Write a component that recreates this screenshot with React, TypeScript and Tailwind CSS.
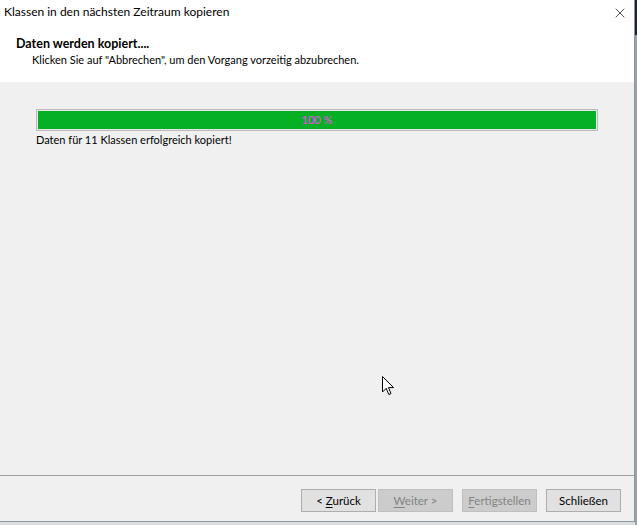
import { X } from 'lucide-react';

const FONT = 'Lato, "Liberation Sans", sans-serif';

type DialogButtonProps = {
  label: string;
  accel: number;
  disabled?: boolean;
};

// Renders a classic Windows dialog button, with the accelerator letter underlined.
function DialogButton({ label, accel, disabled }: DialogButtonProps) {
  const before = label.slice(0, accel);
  const key = label.slice(accel, accel + 1);
  const after = label.slice(accel + 1);
  return (
    <div
      className={
        disabled
          ? 'flex h-[23px] w-[75px] items-center justify-center border border-[#bfbfbf] bg-[#cccccc] text-[11.5px] text-[#838383]'
          : 'flex h-[23px] w-[75px] items-center justify-center border border-[#adadad] bg-[#e1e1e1] text-[11.5px] text-black'
      }
    >
      {accel < 0 ? (
        label
      ) : (
        <span>
          {before}
          <span className="underline underline-offset-2">{key}</span>
          {after}
        </span>
      )}
    </div>
  );
}

function Cursor() {
  return (
    <svg width="13" height="20" viewBox="0 0 13 20" className="absolute left-[382px] top-[376px]">
      <path
        d="M0.5 0.5 L0.5 16 L4.2 12.3 L6.8 18.5 L9 17.6 L6.5 11.6 L11.5 11.6 Z"
        fill="#ffffff"
        stroke="#000000"
        strokeWidth="1"
        strokeLinejoin="miter"
      />
    </svg>
  );
}

export default function App() {
  return (
    <div className="relative flex h-[525px] w-[637px] bg-[#dcdcdc]" style={{ fontFamily: FONT }}>
      <div className="flex h-[522px] w-[635px] flex-col border-r border-b border-[#8d96a3] bg-[#f0f0f0]">
        <div className="flex h-[30px] items-start justify-between bg-white pl-[4px] pr-[6px] pt-[4px]">
          <span className="text-[12px] leading-[16px] text-black">Klassen in den nächsten Zeitraum kopieren</span>
          <X size={16} strokeWidth={1} className="mt-[1px] text-black" />
        </div>
        <div className="flex h-[52px] flex-col bg-white pl-[16px] pt-[6px]">
          <span className="text-[12.5px] font-bold leading-[16px] text-black">Daten werden kopiert....</span>
          <span className="pl-[16px] text-[11px] leading-[16px] text-black">
            Klicken Sie auf "Abbrechen", um den Vorgang vorzeitig abzubrechen.
          </span>
        </div>
        <div className="flex flex-1 flex-col px-[36px] pt-[27px]">
          <div className="h-[22px] w-[562px] border border-[#bcbcbc] bg-[#e6e6e6] p-[1px]">
            <div className="flex h-full w-full items-center justify-center bg-[#06b025]">
              <span className="text-[11px] leading-[12px] text-[#ff3cff]">100 %</span>
            </div>
          </div>
          <span className="mt-[1px] text-[11px] leading-[16px] text-black">
            Daten für 11 Klassen erfolgreich kopiert!
          </span>
        </div>
        <div className="flex h-[46px] items-start justify-end border-t border-[#a0a0a0] pr-[13px] pt-[13px]">
          <div className="flex gap-[2px]">
            <DialogButton label="< Zurück" accel={2} />
            <DialogButton label="Weiter >" accel={0} disabled />
          </div>
          <div className="ml-[9px]">
            <DialogButton label="Fertigstellen" accel={0} disabled />
          </div>
          <div className="ml-[9px]">
            <DialogButton label="Schließen" accel={-1} />
          </div>
        </div>
      </div>
      <div className="flex w-[2px] flex-col">
        <div className="h-[35px] bg-[#1d2236]" />
        <div className="flex-1 bg-[#9aa1ab]" />
      </div>
      <Cursor />
    </div>
  );
}
